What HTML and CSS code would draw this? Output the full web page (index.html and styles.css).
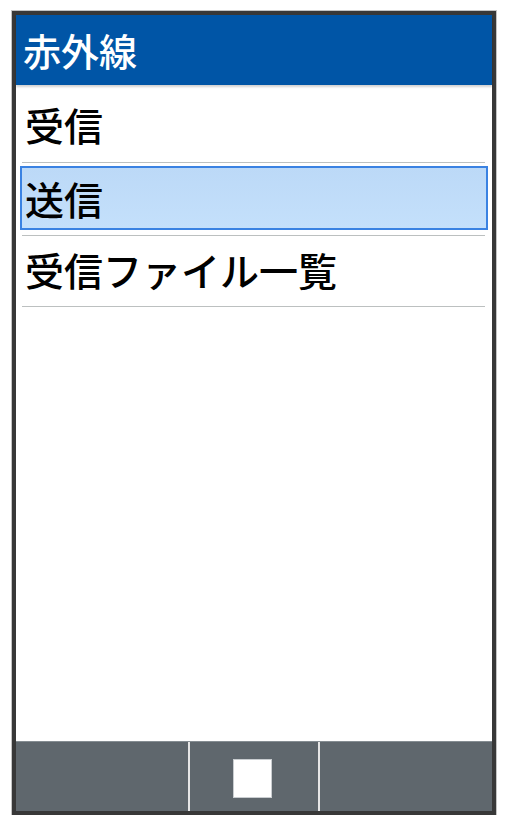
FILE: index.html
```html
<!DOCTYPE html>
<html lang="ja">

  <head>
    <meta charset="UTF-8">
    <meta name="viewport" content="width=device-width, initial-scale=1.0">
    <title>赤外線</title>
    <link rel="stylesheet" href="styles.css">
  </head>

  <body>
    <div class="phone">
      <div class="title-bar">赤外線</div>

      <ul class="menu">
        <li class="menu-item first">受信</li>
        <li class="menu-item selected"><span class="focus">送信</span></li>
        <li class="menu-item last">受信ファイル一覧</li>
      </ul>

      <div class="softkeys">
        <div class="softkey side"></div>
        <div class="softkey center"><span class="square"></span></div>
        <div class="softkey side"></div>
      </div>
    </div>
  </body>

</html>
```

FILE: styles.css
```css
:root {
  --frame: #383838;
  --header-bg: #0055a6;
  --select-bg: #c0dcf9;
  --select-border: #3a82e2;
  --line: #bcc0c0;
  --softkey-bg: #5f676d;
}

body {
  margin: 0;
  background-color: #ffffff;
  font-family: "Noto Sans CJK JP", "Noto Sans", sans-serif;
  color: #000000;
}

.phone {
  box-sizing: border-box;
  width: 484px;
  height: 804px;
  margin: 11px 0 0 12px;
  border: 4px solid var(--frame);
  box-shadow: 0 0 0 1px #c4c4c4;
  display: flex;
  flex-direction: column;
  background-color: #ffffff;
}

.title-bar {
  height: 70px;
  line-height: 70px;
  padding-left: 7px;
  background-color: var(--header-bg);
  color: #ffffff;
  font-size: 38px;
  font-weight: 500;
  box-shadow: 0 2px 2px rgba(0, 0, 0, 0.18);
  position: relative;
}

.menu {
  list-style: none;
  margin: 0 7px 0 6px;
  padding: 0;
  flex: 1;
}

.menu-item {
  font-size: 39px;
  font-weight: 500;
  border-bottom: 1px solid var(--line);
  padding-left: 3px;
}

.menu-item.first {
  height: 77px;
  line-height: 78px;
}

.menu-item.selected {
  height: 72px;
  padding: 0;
  display: flex;
  align-items: flex-start;
}

.menu-item.last {
  height: 70px;
  line-height: 67px;
}

.focus {
  box-sizing: border-box;
  flex: 1;
  height: 64px;
  line-height: 61px;
  margin: 3px -3px 0 -2px;
  padding-left: 3px;
  border: 2px solid var(--select-border);
  background: linear-gradient(#bcd9f7, #c4e0fb);
}

.softkeys {
  height: 70px;
  display: flex;
  gap: 2px;
  background-color: #e6e6e6;
  border-top: 1px solid #858d92;
  box-sizing: border-box;
}

.softkey {
  background-color: var(--softkey-bg);
}

.softkey.side {
  width: 172px;
}

.softkey.center {
  flex: 1;
  display: flex;
  justify-content: center;
  padding: 17px 4px 0 0;
}

.square {
  box-sizing: border-box;
  width: 39px;
  height: 39px;
  background-color: #ffffff;
  border: 1px solid #c9cdd0;
}
```
